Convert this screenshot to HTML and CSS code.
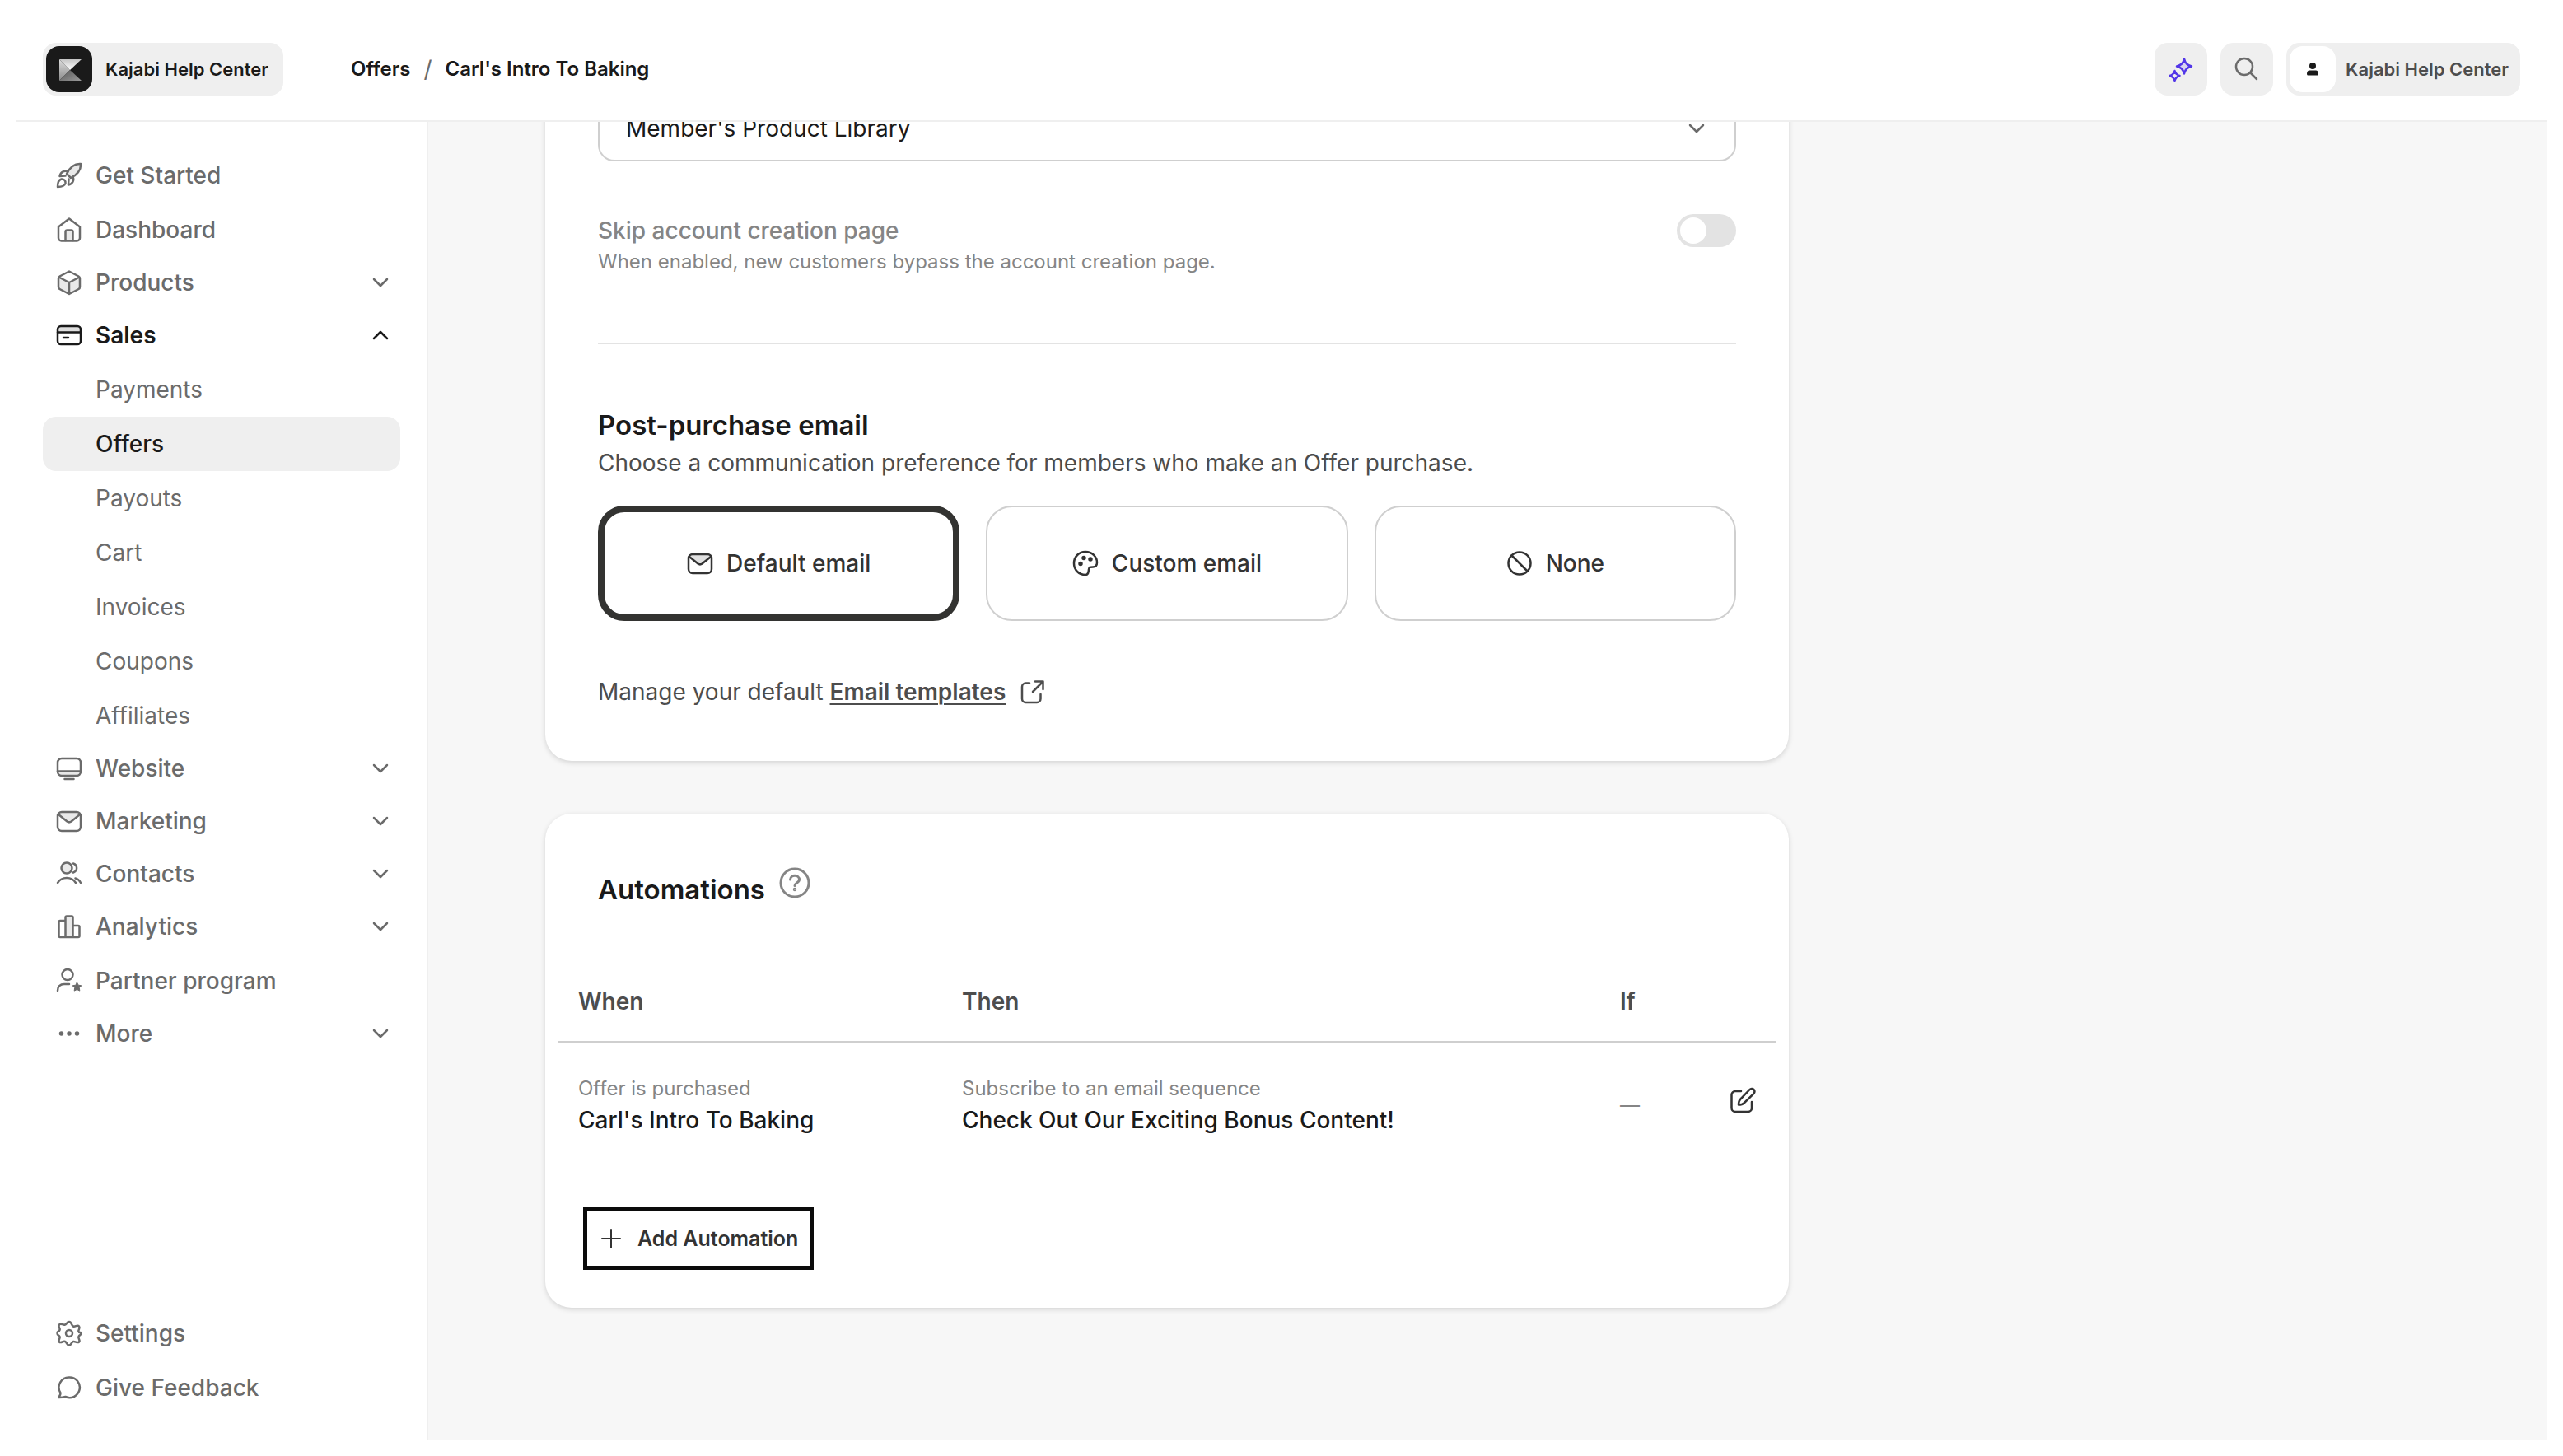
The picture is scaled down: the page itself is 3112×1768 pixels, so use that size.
FILE: index.html
```html
<!DOCTYPE html>
<html lang="en">
<head>
    <meta charset="UTF-8">
    <meta name="viewport" content="width=device-width, initial-scale=1.0">
    <title>Carl's Intro To Baking - Offers</title>
    <link rel="stylesheet" href="styles.css">
</head>
<body>
    <!-- shared icons -->
    <svg class="sprite" aria-hidden="true">
        <symbol id="chevron-down" viewBox="0 0 24 24"><path d="M4 8l8 8 8-8"/></symbol>
        <symbol id="chevron-up" viewBox="0 0 24 24"><path d="M4 16l8-8 8 8"/></symbol>
        <symbol id="mail" viewBox="0 0 32 32">
            <path class="tint" d="M3 8l13 9 13-9-3-4H6z"/>
            <rect x="2" y="5" width="28" height="23" rx="5"/>
            <path d="M3 8l10.500 8.500q2.500 1.800 5 0L29 8"/>
        </symbol>
    </svg>

    <header class="topbar">
        <a class="site" href="#">
            <svg class="site-logo" viewBox="0 0 56 56">
                <defs>
                    <linearGradient id="k-top" x1="0" y1="0" x2="0" y2="1"><stop offset="0" stop-color="#c4c4c4"/><stop offset="1" stop-color="#fff"/></linearGradient>
                    <linearGradient id="k-left" x1="0" y1="0" x2="0" y2="1"><stop offset="0" stop-color="#ddd"/><stop offset="1" stop-color="#8a8a8a"/></linearGradient>
                    <linearGradient id="k-bottom" x1="0" y1="0" x2="1" y2="1"><stop offset="0" stop-color="#555"/><stop offset="1" stop-color="#9a9a9a"/></linearGradient>
                </defs>
                <rect width="56" height="56" rx="16" fill="#1a1a1a"/>
                <path d="M16 16v26l13-13z" fill="url(#k-left)"/>
                <path d="M16 16h27L29 29z" fill="url(#k-top)"/>
                <path d="M29 29l14 13H16z" fill="url(#k-bottom)"/>
            </svg>
            <span>Kajabi Help Center</span>
        </a>
        <nav class="breadcrumb" aria-label="Breadcrumb">
            <a href="#">Offers</a>
            <span class="slash">/</span>
            <a href="#">Carl's Intro To Baking</a>
        </nav>
        <div class="topbar-actions">
            <button class="icon-btn ai" aria-label="Assistant">
                <svg class="icon" viewBox="0 0 32 32"><path class="tint" d="M20 3.500c1.500 5.500 3.500 7.500 9 9-5.500 1.500-7.500 3.500-9 9-1.500-5.500-3.500-7.500-9-9 5.500-1.500 7.500-3.500 9-9z"/><path d="M20 3.500c1.500 5.500 3.500 7.500 9 9-5.500 1.500-7.500 3.500-9 9-1.500-5.500-3.500-7.500-9-9 5.500-1.500 7.500-3.500 9-9z"/><path d="M8.500 18c1 3.500 2.500 5 6 6-3.500 1-5 2.500-6 6-1-3.500-2.500-5-6-6 3.500-1 5-2.500 6-6z"/></svg>
            </button>
            <button class="icon-btn" aria-label="Search">
                <svg class="icon" viewBox="0 0 32 32"><circle cx="13" cy="13" r="10"/><path d="M20.500 20.500L28 28"/></svg>
            </button>
            <button class="account">
                <span class="avatar"><svg viewBox="0 0 16 16"><circle cx="8" cy="4" r="4"/><path d="M1 13.500C1 11 2.500 9.500 4 9.500h8c1.500 0 3 1.500 3 4 0 1.500-.5 2-1.500 2h-11C1.500 15.500 1 15 1 13.500z"/></svg></span>
                <span>Kajabi Help Center</span>
            </button>
        </div>
    </header>

    <div class="layout">
        <aside class="sidebar">
            <nav class="menu">
                <a class="item" href="#">
                    <svg class="icon" viewBox="0 0 32 32"><path class="tint" d="M30 2c-7-.5-13 4-17 12l5 5c8-4 12.500-10 12-17z"/><path d="M30 2c-7-.5-13 4-17 12l5 5c8-4 12.500-10 12-17z"/><path d="M14.500 11.500C10 9.500 5.500 12 4.500 17l7-.5M20.500 17.500c2 4.500-.5 9-5.500 10l.5-7M6.500 20.500C3 21.500 2 25 2 30c5 0 8.500-1 9.500-4.500.5-3-2-5.500-5-5z"/></svg>
                    <span>Get Started</span>
                </a>
                <a class="item" href="#">
                    <svg class="icon" viewBox="0 0 32 32"><path d="M3 12.500L16 2.500l13 10V26a3.500 3.500 0 0 1-3.500 3.500h-19A3.500 3.500 0 0 1 3 26z"/><path class="tint" d="M11.500 29V18.500a2 2 0 0 1 2-2h5a2 2 0 0 1 2 2V29"/><path d="M11.500 29V18.500a2 2 0 0 1 2-2h5a2 2 0 0 1 2 2V29"/></svg>
                    <span>Dashboard</span>
                </a>
                <button class="item expand">
                    <svg class="icon" viewBox="0 0 32 32"><path class="tint" d="M16 16L3 9v15l13 6 13-6V9z"/><path d="M16 2.500L27.500 8.500Q29 9.300 29 11v10.500q0 1.700-1.500 2.500L16 30 4.500 24Q3 23.200 3 21.500V11q0-1.700 1.500-2.500zM3.500 9.500L16 16l12.500-6.500M16 16v14"/></svg>
                    <span>Products</span>
                    <svg class="chevron"><use href="#chevron-down"/></svg>
                </button>
                <button class="item expand open">
                    <svg class="icon" viewBox="0 0 32 32"><path class="tint" d="M3 6h26v6H3z"/><rect x="2" y="5" width="28" height="22" rx="4"/><path d="M2 12.500h28M9 19h6"/></svg>
                    <span>Sales</span>
                    <svg class="chevron"><use href="#chevron-up"/></svg>
                </button>
                <a class="item sub" href="#">Payments</a>
                <a class="item sub current" href="#" aria-current="page">Offers</a>
                <a class="item sub" href="#">Payouts</a>
                <a class="item sub" href="#">Cart</a>
                <a class="item sub" href="#">Invoices</a>
                <a class="item sub" href="#">Coupons</a>
                <a class="item sub" href="#">Affiliates</a>
                <button class="item expand">
                    <svg class="icon" viewBox="0 0 32 32"><path class="tint" d="M3 20h26v4H3z"/><rect x="2" y="4" width="28" height="21" rx="5"/><path d="M2 19.500h28M10.500 29h11"/></svg>
                    <span>Website</span>
                    <svg class="chevron"><use href="#chevron-down"/></svg>
                </button>
                <button class="item expand">
                    <svg class="icon"><use href="#mail"/></svg>
                    <span>Marketing</span>
                    <svg class="chevron"><use href="#chevron-down"/></svg>
                </button>
                <button class="item expand">
                    <svg class="icon" viewBox="0 0 32 32"><circle class="tint" cx="13" cy="9" r="6.500"/><circle cx="13" cy="9" r="6.500"/><path d="M2 27c5-8 17-8 22 0M21 3.500c5.500 2 5.500 9 0 11M23.500 21.500c3 .5 5 2.500 6.500 5.500"/></svg>
                    <span>Contacts</span>
                    <svg class="chevron"><use href="#chevron-down"/></svg>
                </button>
                <button class="item expand">
                    <svg class="icon" viewBox="0 0 32 32"><path class="tint" d="M11.500 3.500h9V29h-9z"/><path d="M11.500 29V5A1.500 1.500 0 0 1 13 3.500h6A1.500 1.500 0 0 1 20.500 5v24M11.500 9H5a1.500 1.500 0 0 0-1.500 1.500v17A1.500 1.500 0 0 0 5 29h22a1.500 1.500 0 0 0 1.500-1.500v-11A1.500 1.500 0 0 0 27 15h-6.500"/></svg>
                    <span>Analytics</span>
                    <svg class="chevron"><use href="#chevron-down"/></svg>
                </button>
                <a class="item" href="#">
                    <svg class="icon" viewBox="0 0 32 32"><circle cx="14" cy="8.500" r="6.500"/><path d="M2 28c0-5 3-8 8-8h6"/><path class="star" d="M25.500 18l1.700 3.200 3.600.6-2.500 2.600.5 3.700-3.300-1.600-3.300 1.600.5-3.700-2.500-2.600 3.600-.6z"/></svg>
                    <span>Partner program</span>
                </a>
                <button class="item expand">
                    <svg class="icon" viewBox="0 0 32 32"><g class="solid"><circle cx="6.500" cy="16" r="1.500"/><circle cx="16" cy="16" r="1.500"/><circle cx="25.500" cy="16" r="1.500"/></g></svg>
                    <span>More</span>
                    <svg class="chevron"><use href="#chevron-down"/></svg>
                </button>
            </nav>
            <nav class="menu">
                <a class="item" href="#">
                    <svg class="icon" viewBox="0 0 32 32"><path d="M16 2c3 0 2.500 4.500 5 5.500s5-2.500 7 0-1.500 4-.5 6.500S30.500 13.500 30.500 16s-2 1.500-3 4 2.500 4.500.5 6.500-4.500-1-7-.500S19 30.500 16 30.500s-2.500-3.500-5-4.500-5 2.500-7 .5 1.500-4 .5-6.500-3-1-3-4 2-1.500 3-4-2.500-4-.5-6.500 4.500 1 7 0S13 2 16 2z"/><circle cx="16" cy="16" r="4"/></svg>
                    <span>Settings</span>
                </a>
                <a class="item" href="#">
                    <svg class="icon" viewBox="0 0 32 32"><path d="M16.500 3.500a12.300 12.300 0 1 1-5 23.500c-2.500.8-5 1-8 1 .3-1.500 2-3 2-5.500A12.300 12.300 0 0 1 16.500 3.500z"/></svg>
                    <span>Give Feedback</span>
                </a>
            </nav>
        </aside>

        <main class="main">
            <div class="content">
                <section class="card">
                    <div class="select">
                        <select aria-label="After purchase page">
                            <option>Member's Product Library</option>
                        </select>
                        <svg class="chevron"><use href="#chevron-down"/></svg>
                    </div>

                    <div class="setting">
                        <div>
                            <label class="setting-label" for="skip">Skip account creation page</label>
                            <p class="setting-hint">When enabled, new customers bypass the account creation page.</p>
                        </div>
                        <input class="toggle" type="checkbox" id="skip" disabled>
                    </div>

                    <hr>

                    <h2>Post-purchase email</h2>
                    <p class="lead">Choose a communication preference for members who make an Offer purchase.</p>

                    <div class="options">
                        <label class="option">
                            <input type="radio" name="email" checked>
                            <svg class="icon"><use href="#mail"/></svg>
                            <span>Default email</span>
                        </label>
                        <label class="option">
                            <input type="radio" name="email">
                            <svg class="icon" viewBox="0 0 32 32"><path d="M16 30C8 30 2 24 2 16S8 2 16 2s14 6 14 13c0 3.500-2 5.500-5 5.500-4 0-4.500 0-5 3-.5 3.500-.5 6.500-4 6.500z"/><g class="solid"><circle cx="14" cy="9.500" r="1.500"/><circle cx="22" cy="11" r="1.500"/><circle cx="10" cy="16.500" r="1.500"/></g></svg>
                            <span>Custom email</span>
                        </label>
                        <label class="option">
                            <input type="radio" name="email">
                            <svg class="icon" viewBox="0 0 32 32"><circle cx="16" cy="16" r="13.500"/><path d="M6.500 6.500l19 19"/></svg>
                            <span>None</span>
                        </label>
                    </div>

                    <p class="manage">
                        <span>Manage your default <a href="#">Email templates</a></span>
                        <svg class="icon" viewBox="0 0 32 32"><path d="M13 5.500H8.500A4.500 4.500 0 0 0 4 10v14.500A4.500 4.500 0 0 0 8.500 29H22a4.500 4.500 0 0 0 4.500-4.500V19M20 3.500h9.500V13M29 4L17 16"/></svg>
                    </p>
                </section>

                <section class="card automations">
                    <div class="card-title">
                        <h2>Automations</h2>
                        <button class="help" aria-label="About automations">
                            <svg viewBox="0 0 40 40"><circle cx="20" cy="20" r="17"/><path d="M14.500 16c.5-6.500 11-6 11 0 0 4-5.500 4-5.500 7.500"/><circle class="solid" cx="20" cy="28" r=".7"/></svg>
                        </button>
                    </div>

                    <table>
                        <thead>
                            <tr>
                                <th class="col-when">When</th>
                                <th class="col-then">Then</th>
                                <th>If</th>
                                <th></th>
                            </tr>
                        </thead>
                        <tbody>
                            <tr>
                                <td><small>Offer is purchased</small>Carl's Intro To Baking</td>
                                <td><small>Subscribe to an email sequence</small>Check Out Our Exciting Bonus Content!</td>
                                <td class="empty">—</td>
                                <td class="edit">
                                    <button aria-label="Edit automation">
                                        <svg class="icon" viewBox="0 0 32 32"><path d="M14 5H7a4.500 4.500 0 0 0-4.500 4.500v16A4.500 4.500 0 0 0 7 30h15.500a4.500 4.500 0 0 0 4.500-4.500V18"/><path d="M11 21.500c0-3 .5-5 2-6.500L24.500 3a3.400 3.400 0 0 1 5 4.800L17.500 19.500c-1.500 1.500-3.500 2-6.500 2z"/></svg>
                                    </button>
                                </td>
                            </tr>
                        </tbody>
                    </table>

                    <button class="add">
                        <svg viewBox="0 0 24 24"><path d="M12 1v22M1 12h22"/></svg>
                        <span>Add Automation</span>
                    </button>
                </section>
            </div>
        </main>
    </div>
</body>
</html>
```

FILE: styles.css
```css
* {
    box-sizing: border-box;
}

body {
    margin: 0;
    padding: 20px;
    min-height: 100vh;
    display: flex;
    flex-direction: column;
    background: #fff;
    color: #1a1a1a;
    font-family: Inter, sans-serif;
    font-size: 28px;
    line-height: 40px;
}

a {
    color: inherit;
    text-decoration: none;
}

button {
    padding: 0;
    border: none;
    background: none;
    color: inherit;
    font: inherit;
    cursor: pointer;
}

h2,
p {
    margin: 0;
}

h2 {
    font-size: 33px;
    font-weight: 600;
    line-height: 48px;
}

svg {
    flex: none;
    fill: none;
    stroke: currentColor;
    stroke-width: 2.5;
    stroke-linecap: round;
    stroke-linejoin: round;
}

.sprite {
    display: none;
}

.icon {
    width: 32px;
    height: 32px;
}

.chevron {
    width: 24px;
    height: 24px;
}

.tint {
    fill: currentColor;
    fill-opacity: 0.15;
    stroke: none;
}

.solid {
    fill: currentColor;
}

.star {
    fill: currentColor;
    stroke-width: 1;
}

/* Top bar */
.topbar {
    display: flex;
    align-items: center;
    padding: 32px 32px 30px;
    border-bottom: 2px solid #efefef;
}

.site,
.account {
    display: flex;
    align-items: center;
    height: 64px;
    border-radius: 16px;
    background: #efefef;
    font-size: 22px;
    font-weight: 600;
    white-space: nowrap;
}

.site {
    gap: 16px;
    padding: 4px 18px 4px 4px;
}

.site-logo {
    width: 56px;
    height: 56px;
    stroke: none;
}

.breadcrumb {
    display: flex;
    gap: 16px;
    margin-left: 82px;
    font-size: 24px;
    font-weight: 600;
}

.slash {
    color: #6b6b6b;
    font-size: 28px;
    font-weight: 400;
}

.topbar-actions {
    display: flex;
    gap: 16px;
    margin-left: auto;
}

.icon-btn {
    display: flex;
    align-items: center;
    justify-content: center;
    width: 64px;
    height: 64px;
    border-radius: 16px;
    background: #efefef;
    color: #6b6b6b;
}

.ai {
    color: #5236e8;
}

.account {
    gap: 12px;
    padding: 4px 14px 4px 4px;
    color: #4d4d4d;
}

.avatar {
    display: flex;
    align-items: center;
    justify-content: center;
    width: 56px;
    height: 56px;
    border-radius: 16px;
    background: #fff;
}

.avatar svg {
    width: 16px;
    height: 16px;
    fill: #1a1a1a;
    stroke: none;
}

/* Sidebar */
.layout {
    display: flex;
    flex: 1;
}

.sidebar {
    display: flex;
    flex-direction: column;
    justify-content: space-between;
    width: 500px;
    padding: 32px 32px 30px;
    border-right: 2px solid #efefef;
}

.menu {
    display: flex;
    flex-direction: column;
}

.item {
    display: flex;
    align-items: center;
    gap: 16px;
    height: 66px;
    padding: 0 12px 0 16px;
    border-radius: 16px;
    color: #6b6b6b;
    font-weight: 500;
}

.expand {
    height: 62px;
    margin-bottom: 2px;
}

.expand .chevron {
    margin-left: auto;
}

.open {
    color: #1a1a1a;
    font-weight: 600;
}

.sub {
    padding-left: 64px;
    font-weight: 400;
}

.current {
    background: #efefef;
    color: #1a1a1a;
    font-weight: 500;
}

/* Content */
.main {
    flex: 1;
    overflow: hidden;
    padding: 0 142px;
    background: #f7f7f7;
}

/* scrolled under the top bar */
.content {
    display: flex;
    flex-direction: column;
    gap: 64px;
    max-width: 1510px;
    margin-top: -96px;
}

.card {
    padding: 64px;
    border-radius: 32px;
    background: #fff;
    box-shadow: 0 2px 6px rgba(0, 0, 0, 0.15);
}

.select {
    display: grid;
    align-items: center;
}

.select select,
.select .chevron {
    grid-area: 1 / 1;
}

.select select {
    appearance: none;
    width: 100%;
    height: 80px;
    padding: 0 32px;
    border: 2px solid #cfcfcf;
    border-radius: 20px;
    background: #fff;
    color: #1a1a1a;
    font: inherit;
}

.select .chevron {
    justify-self: end;
    margin-right: 36px;
    color: #6b6b6b;
    pointer-events: none;
}

.setting {
    display: flex;
    justify-content: space-between;
    margin: 64px 0 80px;
    color: #858585;
}

.setting-label {
    font-weight: 500;
}

.setting-hint {
    font-size: 24px;
    line-height: 36px;
}

.toggle {
    appearance: none;
    width: 72px;
    height: 40px;
    margin: 0;
    padding: 4px;
    border-radius: 20px;
    background: #e3e3e3;
}

.toggle::before {
    content: "";
    display: block;
    width: 32px;
    height: 32px;
    border-radius: 50%;
    background: #fff;
}

.toggle:checked::before {
    margin-left: auto;
}

hr {
    margin: 0 0 74px;
    border: none;
    border-top: 2px solid #e3e3e3;
}

.lead {
    color: #4d4d4d;
    line-height: 44px;
}

.options {
    display: grid;
    grid-template-columns: repeat(3, 1fr);
    gap: 32px;
    margin: 30px 0 66px;
}

.option {
    display: flex;
    align-items: center;
    justify-content: center;
    gap: 16px;
    height: 140px;
    border: 2px solid #cfcfcf;
    border-radius: 32px;
    color: #333;
    font-weight: 500;
    cursor: pointer;
}

.option:has(:checked) {
    border: 8px solid #333331;
}

.option input {
    position: absolute;
    appearance: none;
    margin: 0;
}

.manage {
    display: flex;
    align-items: center;
    gap: 16px;
    color: #4d4d4d;
}

.manage a {
    font-weight: 600;
    text-decoration: underline;
    text-decoration-thickness: 2px;
    text-underline-offset: 4px;
}

/* Automations */
.automations {
    padding: 64px 16px 46px;
}

.card-title {
    display: flex;
    align-items: flex-start;
    gap: 16px;
    padding: 0 48px;
    margin-bottom: 60px;
}

.card-title h2 {
    line-height: 56px;
}

.help svg {
    display: block;
    width: 40px;
    height: 40px;
    color: #858585;
    stroke-width: 3;
}

table {
    width: 100%;
    border-collapse: separate;
    border-spacing: 0;
    table-layout: fixed;
}

th {
    padding: 28px 24px;
    border-bottom: 2px solid #cfcfcf;
    color: #4d4d4d;
    font-weight: 600;
    text-align: left;
}

.col-when {
    width: 466px;
}

.col-then {
    width: 799px;
}

td {
    padding: 38px 24px;
    font-weight: 500;
}

td small {
    display: block;
    color: #858585;
    font-size: 24px;
    font-weight: 400;
    line-height: 36px;
}

.empty {
    color: #858585;
    font-size: 24px;
    font-weight: 400;
}

.edit {
    text-align: right;
    vertical-align: top;
}

.edit button {
    display: inline-flex;
    align-items: center;
    height: 64px;
    color: #333;
}

.add {
    display: flex;
    align-items: center;
    gap: 20px;
    height: 76px;
    margin: 48px 0 0 30px;
    padding: 0 14px 0 17px;
    border: 5px solid #0b0b0b;
    color: #333;
    font-size: 25px;
    font-weight: 600;
}

.add svg {
    width: 24px;
    height: 24px;
    stroke-width: 2;
}
```
